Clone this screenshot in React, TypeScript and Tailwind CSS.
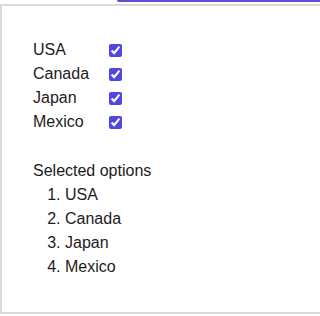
import React, { useState } from "react";

const OPTIONS = ["USA", "Canada", "Japan", "Mexico"];

export default function App() {
  const [checked, setChecked] = useState<Record<string, boolean>>({
    USA: true,
    Canada: true,
    Japan: true,
    Mexico: true,
  });
  const selected = OPTIONS.filter((o) => checked[o]);
  return (
    <div
      className="w-full h-[316px] bg-white overflow-hidden text-[16px] text-[#1c1c1c]"
      style={{ fontFamily: '"Liberation Sans", Arial, sans-serif' }}
    >
      <div className="ml-[117px] h-[2px] bg-[#5a4fcf] rounded-bl-[2px]" />
      <div className="mt-[2px] h-[310px] border-t-2 border-l-2 border-b-2 border-[#dadada] pl-[31px] pt-[32px]">
        <div className="flex flex-col">
          {OPTIONS.map((o) => (
            <label key={o} className="flex items-center h-[24px] leading-[24px]">
              <span className="w-[76px]">{o}</span>
              <input
                type="checkbox"
                className="m-0 w-[13px] h-[13px] accent-[#4f46e5]"
                checked={!!checked[o]}
                onChange={() => setChecked({ ...checked, [o]: !checked[o] })}
              />
            </label>
          ))}
        </div>
        <div className="mt-[25px] leading-[24px]">Selected options</div>
        <ol className="list-decimal pl-8 leading-[24px]">
          {selected.map((o) => (
            <li key={o}>{o}</li>
          ))}
        </ol>
      </div>
    </div>
  );
}
